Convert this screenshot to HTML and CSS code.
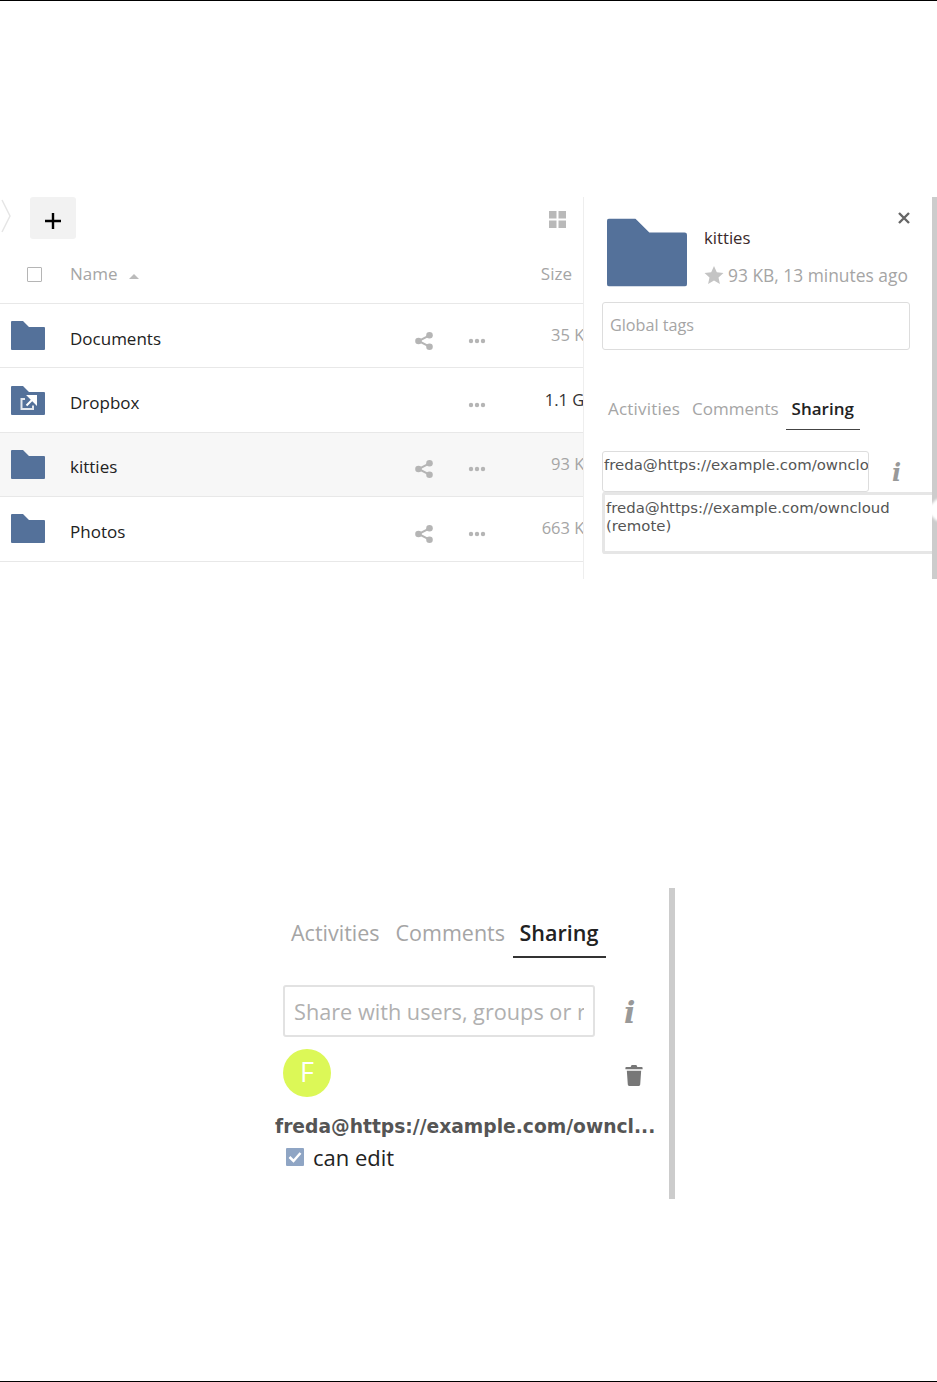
FILE: index.html
```html
<!DOCTYPE html>
<html lang="en">
<head>
    <meta charset="UTF-8">
    <title>Federated sharing</title>
    <link rel="stylesheet" href="styles.css">
</head>
<body>
    <svg class="defs" width="0" height="0">
        <symbol id="folder" viewBox="0 0 34 29">
            <path d="M1 0h11l6 6h15a1 1 0 0 1 1 1v21a1 1 0 0 1-1 1H1a1 1 0 0 1-1-1V1a1 1 0 0 1 1-1z"/>
        </symbol>
        <symbol id="share" viewBox="0 0 18 18">
            <circle cx="3.500" cy="9" r="3.300"/><circle cx="14.500" cy="3.300" r="3.300"/><circle cx="14.500" cy="14.700" r="3.300"/>
            <path d="M14.500 3.300L3.500 9l11 5.700" fill="none" stroke="#b5b5b5" stroke-width="2"/>
        </symbol>
        <symbol id="dots" viewBox="0 0 18 6">
            <circle cx="3" cy="3" r="2.200"/><circle cx="9" cy="3" r="2.200"/><circle cx="15" cy="3" r="2.200"/>
        </symbol>
    </svg>

    <div class="page-top"></div>

    <div class="shot-one">
        <div class="files">
            <div class="toolbar">
                <svg class="crumb" width="12" height="34" viewBox="0 0 12 34"><path d="M2 1l8 16-8 16" fill="none" stroke="#e6e6e6" stroke-width="1.500"/></svg>
                <div class="new-btn"><svg width="16" height="16" viewBox="0 0 16 16"><path d="M8 0v16M0 8h16" stroke="#000" stroke-width="2.400"/></svg></div>
                <svg class="grid-icon" width="17" height="17" viewBox="0 0 17 17"><path d="M0 0h7.500v7.500H0zM9.500 0H17v7.500H9.500zM0 9.500h7.500V17H0zM9.500 9.500H17V17H9.500z" fill="#b9b9b9"/></svg>
            </div>
            <div class="head-row">
                <span class="checkbox"></span>
                <span class="col-name">Name</span>
                <span class="sort-arrow"></span>
                <span class="col-size">Size</span>
            </div>
            <div class="file-row">
                <svg class="folder-icon"><use href="#folder"/></svg>
                <span class="file-name">Documents</span>
                <svg class="share-icon"><use href="#share"/></svg>
                <svg class="dots-icon"><use href="#dots"/></svg>
                <span class="file-size">35 KB</span>
            </div>
            <div class="file-row">
                <svg class="folder-icon" viewBox="0 0 34 29">
                    <use href="#folder" width="34" height="29"/>
                    <path d="M14 13h-3.500v10h11.500v-3.500" fill="none" stroke="#e4e8ee" stroke-width="2"/>
                    <path d="M15.500 19.500l6-6M17.500 10H25v7.500z" fill="#fff" stroke="#fff" stroke-width="2"/>
                </svg>
                <span class="file-name">Dropbox</span>
                <svg class="dots-icon only"><use href="#dots"/></svg>
                <span class="file-size dark">1.1 GB</span>
            </div>
            <div class="file-row selected">
                <svg class="folder-icon"><use href="#folder"/></svg>
                <span class="file-name">kitties</span>
                <svg class="share-icon"><use href="#share"/></svg>
                <svg class="dots-icon"><use href="#dots"/></svg>
                <span class="file-size">93 KB</span>
            </div>
            <div class="file-row">
                <svg class="folder-icon"><use href="#folder"/></svg>
                <span class="file-name">Photos</span>
                <svg class="share-icon"><use href="#share"/></svg>
                <svg class="dots-icon"><use href="#dots"/></svg>
                <span class="file-size">663 KB</span>
            </div>
        </div>

        <div class="details">
            <div class="details-inner">
                <div class="details-head">
                    <svg class="big-folder" viewBox="0 0 34 29"><use href="#folder" width="34" height="29"/></svg>
                    <div class="details-text">
                        <div class="details-name">kitties</div>
                        <div class="details-meta">
                            <svg width="20" height="18" viewBox="0 0 20 18"><path d="M10 0l2.800 6.200 6.700.7-5 4.500 1.400 6.600L10 14.600 4.100 18l1.400-6.600-5-4.500 6.700-.7z" fill="#c4c4c4"/></svg>
                            <span>93 KB, 13 minutes ago</span>
                        </div>
                    </div>
                    <svg class="close-icon" width="12" height="12" viewBox="0 0 12 12"><path d="M1 1l10 10M11 1L1 11" stroke="#666" stroke-width="2.400"/></svg>
                </div>
                <div class="tags-box">Global tags</div>
                <div class="tabs">
                    <span class="tab first">Activities</span>
                    <span class="tab">Comments</span>
                    <span class="tab active">Sharing</span>
                </div>
                <div class="share-line">
                    <div class="share-input typed">freda@https://example.com/ownclo</div>
                    <span class="info-i">i</span>
                </div>
                <div class="suggestion">freda@https://example.com/owncloud<br>(remote)</div>
            </div>
            <div class="scrollbar"></div>
            <div class="notch"></div>
        </div>
    </div>

    <div class="shot-two">
        <div class="tabs big">
            <span class="tab">Activities</span>
            <span class="tab">Comments</span>
            <span class="tab active">Sharing</span>
        </div>
        <div class="share-line big">
            <div class="share-input"><span class="placeholder">Share with users, groups or r</span></div>
            <span class="info-i">i</span>
        </div>
        <div class="share-entry">
            <div class="avatar">F</div>
            <svg class="trash" width="18" height="21" viewBox="0 0 18 22"><path d="M6.500 0h5l1 2H17a1 1 0 0 1 1 1v1.500H0V3a1 1 0 0 1 1-1h4.500zM1.500 6h15l-1 14.500a1.500 1.500 0 0 1-1.500 1.500H4a1.500 1.500 0 0 1-1.500-1.500z" fill="#777"/></svg>
        </div>
        <div class="share-user">freda@https://example.com/owncl...</div>
        <div class="can-edit">
            <svg width="18" height="18" viewBox="0 0 18 18"><rect width="18" height="18" rx="1" fill="#8fa5c4"/><path d="M3.500 9l4 4 7-8" fill="none" stroke="#fff" stroke-width="2.500"/></svg>
            <span>can edit</span>
        </div>
        <div class="scrollbar-two"></div>
    </div>

    <div class="page-bottom"></div>
</body>
</html>
```

FILE: styles.css
```css
* {
    box-sizing: border-box;
}
html, body {
    margin: 0;
    padding: 0;
}
body {
    width: 937px;
    height: 1382px;
    overflow: hidden;
    background-color: white;
    color: #222;
    font-family: 'Open Sans', 'Noto Sans', sans-serif;
    position: relative;
}
.defs {
    position: absolute;
}
.page-top {
    height: 197px;
    border-top: 1px solid #000;
}
.page-bottom {
    position: absolute;
    left: 0;
    right: 0;
    bottom: 0;
    border-bottom: 1px solid #000;
}

/* first screenshot */
.shot-one {
    display: flex;
    height: 382px;
}
.files {
    width: 584px;
    flex: none;
    overflow: hidden;
    border-right: 1px solid #eee;
}
.toolbar {
    display: flex;
    align-items: flex-start;
    height: 51px;
}
.crumb {
    margin-top: 2px;
    flex: none;
}
.new-btn {
    width: 46px;
    height: 42px;
    margin-left: 18px;
    padding-top: 6px;
    background-color: #f2f2f2;
    border-radius: 3px;
    display: flex;
    align-items: center;
    justify-content: center;
}
.grid-icon {
    margin-left: auto;
    margin-right: 17px;
    margin-top: 14px;
}
.head-row {
    display: flex;
    align-items: center;
    height: 56px;
    padding-bottom: 4px;
    border-bottom: 1px solid #e8e8e8;
    color: #a5a5a5;
    font-size: 17px;
}
.checkbox {
    width: 15px;
    height: 15px;
    margin-left: 27px;
    margin-top: 2px;
    border: 1px solid #b5b5b5;
    border-radius: 1px;
}
.col-name {
    margin-left: 28px;
}
.sort-arrow {
    margin-left: 11px;
    margin-top: 6px;
    border-left: 5px solid transparent;
    border-right: 5px solid transparent;
    border-bottom: 5px solid #bbb;
}
.col-size {
    margin-left: auto;
    margin-right: 11px;
}
.file-row {
    display: flex;
    align-items: center;
    width: 595px;
    height: 64.400px;
    border-bottom: 1px solid #e8e8e8;
}
.file-row.selected {
    background-color: #f7f7f7;
}
.folder-icon {
    width: 34px;
    height: 29px;
    margin-left: 11px;
    fill: #54719a;
    flex: none;
}
.file-name {
    margin-left: 25px;
    margin-top: 5px;
    font-size: 17px;
    color: #222;
    flex: 1;
}
.share-icon {
    width: 18px;
    height: 18px;
    fill: #b5b5b5;
    margin-top: 10px;
    flex: none;
}
.dots-icon {
    width: 18px;
    height: 6px;
    margin-left: 35px;
    margin-top: 10px;
    fill: #b5b5b5;
    flex: none;
}
.dots-icon.only {
    margin-left: 0;
}
.file-size {
    width: 109px;
    flex: none;
    font-size: 16.500px;
    color: #a5a5a5;
    text-align: right;
    white-space: nowrap;
    margin-top: -2px;
}
.file-size.dark {
    color: #333;
}

/* details sidebar */
.details {
    flex: 1;
    display: flex;
    min-width: 0;
    position: relative;
}
.details-inner {
    width: 348px;
    padding-left: 18px;
    overflow: hidden;
}
.scrollbar {
    width: 5px;
    background-color: #ccc;
}
.notch {
    position: absolute;
    top: 305px;
    left: 345px;
    width: 16px;
    height: 16px;
    background-color: white;
    transform: rotate(45deg);
    filter: blur(1px);
}
.details-head {
    display: flex;
    height: 105px;
    padding-top: 21px;
    padding-left: 5px;
    position: relative;
}
.big-folder {
    width: 80px;
    height: 69px;
    fill: #54719a;
    flex: none;
}
.details-text {
    margin-left: 17px;
}
.details-name {
    color: #3a2a2a;
    margin-top: 8px;
    font-size: 16.700px;
}
.details-meta {
    display: flex;
    align-items: center;
    gap: 4px;
    margin-top: 14px;
    color: #a5a5a5;
    font-size: 17.400px;
    white-space: nowrap;
}
.close-icon {
    position: absolute;
    top: 15px;
    left: 296px;
}
.tags-box {
    width: 308px;
    height: 48px;
    border: 1px solid #ddd;
    border-radius: 3px;
    padding-left: 7px;
    line-height: 44px;
    font-size: 16.200px;
    color: #a5a5a5;
}
.tabs {
    display: flex;
    margin-top: 47px;
    padding-left: 6px;
    font-size: 17px;
    color: #a5a5a5;
}
.tab {
    margin-right: 12px;
}
.tab.first {
    letter-spacing: 0.2px;
}
.tab.active {
    color: #222;
    font-weight: 600;
    margin-left: -5px;
    margin-right: 0;
    padding: 0 6px 9px;
    border-bottom: 1px solid #444;
}
.share-line {
    display: flex;
    margin-top: 21px;
    height: 41px;
}
.share-input {
    width: 267px;
    height: 41px;
    border: 1px solid #ddd;
    border-radius: 3px;
    overflow: hidden;
    white-space: nowrap;
}
.share-input.typed {
    font-family: 'DejaVu Sans', sans-serif;
    font-size: 14.900px;
    color: #555;
    padding: 4px 0 0 1px;
}
.info-i {
    font-family: 'DejaVu Serif', serif;
    font-style: italic;
    font-weight: bold;
    font-size: 24px;
    color: #999;
    margin-left: 23px;
    margin-top: 7px;
}
.suggestion {
    width: 340px;
    height: 62px;
    border: 3px solid #e6e6e6;
    border-right: none;
    border-radius: 3px;
    padding: 4px 0 0 1px;
    font-family: 'DejaVu Sans', sans-serif;
    font-size: 14.900px;
    line-height: 18px;
    color: #555;
}

/* second screenshot */
.shot-two {
    position: absolute;
    left: 275px;
    top: 888px;
    width: 400px;
    height: 311px;
}
.tabs.big {
    margin-top: 0;
    padding-top: 30px;
    padding-left: 16px;
    font-size: 21.500px;
}
.tabs.big .tab {
    margin-right: 16px;
}
.tabs.big .tab.active {
    margin-left: -8.500px;
    margin-right: 0;
    padding: 0 8px 9px 7px;
    border-bottom: 2px solid #333;
}
.share-line.big {
    margin-top: 27px;
    margin-left: 8px;
    height: 52px;
}
.share-line.big .share-input {
    width: 312px;
    height: 52px;
    border-width: 2px;
    border-color: #e2e2e2;
    padding-left: 9px;
    line-height: 50px;
    font-size: 21.700px;
    color: #b0b0b0;
}
.placeholder {
    display: block;
    width: 290px;
    overflow: hidden;
}
.share-line.big .info-i {
    font-size: 30px;
    margin-left: 29px;
    margin-top: 10px;
}
.share-entry {
    display: flex;
    align-items: center;
    margin-top: 11px;
    margin-left: 8px;
    height: 49px;
}
.avatar {
    width: 48px;
    height: 48px;
    border-radius: 50%;
    background-color: #dcf857;
    color: white;
    text-align: center;
    line-height: 46px;
    font-size: 27px;
}
.trash {
    margin-left: 294px;
    margin-top: 5px;
}
.share-user {
    margin-top: 19px;
    font-family: 'DejaVu Sans', sans-serif;
    font-weight: bold;
    font-size: 18.700px;
    color: #555;
    white-space: nowrap;
}
.can-edit {
    display: flex;
    align-items: center;
    gap: 9px;
    margin-left: 11px;
    margin-top: 5px;
    font-size: 22px;
    color: #222;
}
.scrollbar-two {
    position: absolute;
    top: 0;
    bottom: 0;
    left: 394px;
    width: 6px;
    background-color: #ccc;
}
```
